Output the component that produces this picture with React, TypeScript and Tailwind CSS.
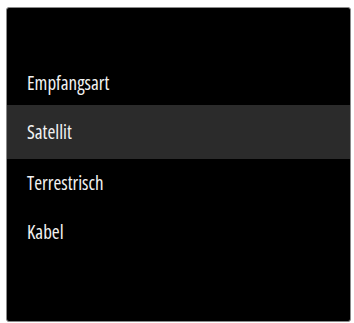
import React from "react";

const items = [
  { label: "Empfangsart", cls: "h-[43px]" },
  { label: "Satellit", cls: "h-[54px] bg-[#2b2b2b]" },
  { label: "Terrestrisch", cls: "h-[49px]" },
  { label: "Kabel", cls: "h-[49px]" },
];

export default function App() {
  return (
    <div className="w-[354px] h-[323px] bg-white pt-[7px] pl-[6px] pr-[3px] pb-[1px]">
      <div className="h-full w-full bg-black rounded-[3px] border border-[#8a8a8a] pt-[54px] flex flex-col font-['Open_Sans',sans-serif] font-stretch-condensed">
        {items.map((it) => (
          <div
            key={it.label}
            className={`flex items-center pl-[20px] text-[19px] text-[#f2f2f2] shrink-0 ${it.cls}`}
          >
            {it.label}
          </div>
        ))}
      </div>
    </div>
  );
}
